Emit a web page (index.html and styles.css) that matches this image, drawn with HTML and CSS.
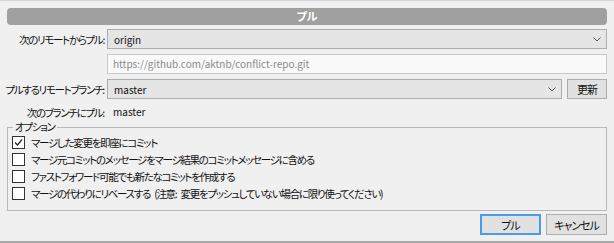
FILE: index.html
```html
<!DOCTYPE html>
<html lang="ja">
<head>
    <meta charset="UTF-8">
    <title>プル</title>
    <link rel="stylesheet" href="styles.css">
</head>
<body>
    <div class="dialog">
        <div class="title">プル</div>
        <div class="form">
            <label class="label">次のリモートからプル:</label>
            <div class="combo wide">
                <span class="latin">origin</span>
                <svg class="arrow" width="8" height="5" viewBox="0 0 8 5"><polyline points="0.5,0.5 4,4 7.5,0.5" fill="none" stroke="#555" stroke-width="1"/></svg>
            </div>

            <span></span>
            <div class="url wide latin">https://github.com/aktnb/conflict-repo.git</div>

            <label class="label">プルするリモートブランチ:</label>
            <div class="combo">
                <span class="latin">master</span>
                <svg class="arrow" width="8" height="5" viewBox="0 0 8 5"><polyline points="0.5,0.5 4,4 7.5,0.5" fill="none" stroke="#555" stroke-width="1"/></svg>
            </div>
            <button class="btn small">更新</button>

            <label class="label short">次のブランチにプル:</label>
            <div class="value latin">master</div>
        </div>

        <fieldset class="options">
            <legend>オプション</legend>
            <label class="check"><span class="box">
                <svg width="9" height="9" viewBox="0 0 9 9"><polyline points="1,4.5 3.5,7 8,1.5" fill="none" stroke="#222" stroke-width="1.2"/></svg>
            </span>マージした変更を即座にコミット</label>
            <label class="check"><span class="box"></span>マージ元コミットのメッセージをマージ結果のコミットメッセージに含める</label>
            <label class="check"><span class="box"></span>ファストフォワード可能でも新たなコミットを作成する</label>
            <label class="check"><span class="box"></span>マージの代わりにリベースする (注意: 変更をプッシュしていない場合に限り使ってください)</label>
        </fieldset>

        <div class="buttons">
            <button class="btn primary">プル</button>
            <button class="btn">キャンセル</button>
        </div>
    </div>
</body>
</html>
```

FILE: styles.css
```css
body {
    margin: 0;
    background: #f0f0f0;
    font-family: "Noto Sans CJK JP", sans-serif;
    font-size: 10.5px;
    font-feature-settings: "palt";
    letter-spacing: -1.3px;
    word-spacing: 3px;
    color: #111;
}
.latin {
    font-size: 10px;
    letter-spacing: 0;
    word-spacing: 0;
}
.dialog {
    width: 614px;
    height: 243px;
    box-sizing: border-box;
    border-top: 1px solid #d6d6d6;
    border-bottom: 2px solid #a8a8a8;
    padding: 7px 7px 0 7px;
}
.title {
    height: 17px;
    line-height: 17px;
    border-radius: 4px;
    background: #a0a0a0;
    color: #fff;
    font-size: 11px;
    font-weight: bold;
    letter-spacing: 0;
    text-align: center;
}
.form {
    display: grid;
    grid-template-columns: 97px 1fr auto;
    column-gap: 3px;
    row-gap: 5px;
    margin-top: 4px;
}
.label {
    display: flex;
    justify-content: flex-end;
    align-items: center;
    height: 20px;
    white-space: nowrap;
}
.label.short {
    height: 16px;
}
.wide {
    grid-column: 2 / 4;
}
.combo {
    height: 20px;
    box-sizing: border-box;
    border: 1px solid #adadad;
    background: #e5e5e5;
    display: flex;
    align-items: center;
    justify-content: space-between;
    padding: 0 5px 0 6px;
}
.arrow {
    display: block;
}
.url {
    height: 20px;
    box-sizing: border-box;
    border: 1px solid #c9c9c9;
    background: #f9f9f9;
    color: #8a8a8a;
    line-height: 18px;
    padding-left: 5px;
}
.value {
    line-height: 16px;
    padding-left: 6px;
}
.btn {
    font-family: inherit;
    font-size: 11px;
    font-feature-settings: "palt";
    letter-spacing: -1px;
    color: #111;
    background: #e1e1e1;
    border: 1px solid #adadad;
    height: 21px;
    width: 61px;
    padding: 0;
    margin: 0;
}
.btn.small {
    width: 40px;
    height: 20px;
    margin-left: 2px;
}
.btn.primary {
    border: 2px solid #4a9be8;
}
.options {
    margin: 0;
    padding: 0 0 8px 4px;
    border: 1px solid #b9b9b9;
}
.options legend {
    padding: 0 2px;
    margin-left: 1px;
    line-height: 14px;
}
.check {
    display: flex;
    align-items: center;
    height: 17px;
    white-space: nowrap;
}
.box {
    width: 11px;
    height: 11px;
    border: 1px solid #333;
    background: #fff;
    margin-right: 6px;
    display: flex;
    align-items: center;
    justify-content: center;
}
.buttons {
    display: flex;
    justify-content: flex-end;
    gap: 5px;
    margin-top: 3px;
}
```
